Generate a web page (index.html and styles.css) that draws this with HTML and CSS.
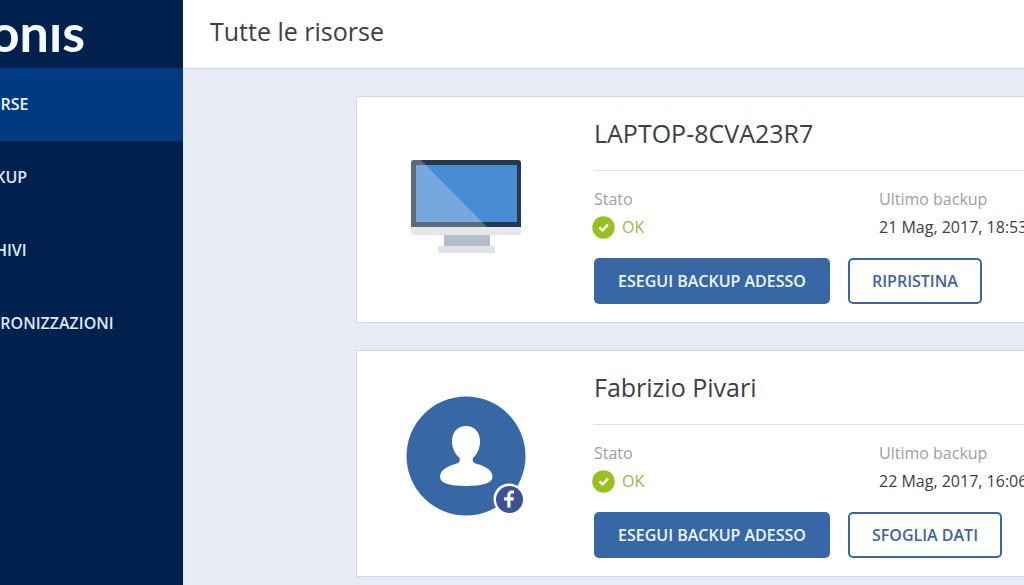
FILE: index.html
```
<!DOCTYPE html>
<html lang="it">
<head>
<meta charset="utf-8">
<title>Tutte le risorse</title>
<link rel="stylesheet" href="styles.css">
</head>
<body>
<div class="app">
  <aside class="sidebar">
    <div class="logo">Acronıs</div>
    <nav class="nav">
      <a class="nav-link active" href="#risorse" aria-current="page">RISORSE</a>
      <a class="nav-link" href="#backup">BACKUP</a>
      <a class="nav-link" href="#archivi">ARCHIVI</a>
      <a class="nav-link" href="#sincronizzazioni">SINCRONIZZAZIONI</a>
    </nav>
  </aside>
  <div class="main">
    <header class="topbar"><h1 class="page-title">Tutte le risorse</h1></header>
    <main class="cards">
      <article class="card">
        <div class="picture">
          <svg width="120" height="120" viewBox="0 0 120 120" aria-hidden="true">
            <path d="M38 85h46v13H38z" fill="#b3bec8"/>
            <path d="M32 98h57v7H32z" fill="#dfe4e8"/>
            <path d="M5 78h110v6q0 3-3 3H8q-3 0-3-3z" fill="#e3e7ea"/>
            <path d="M8 12h104q3 0 3 3v64H5V15q0-3 3-3z" fill="#263850"/>
            <path d="M10 17h101v57H10z" fill="#488bd3"/>
            <path d="M8 12h7l66 67H5V15q0-3 3-3z" fill="#fff" fill-opacity=".25"/>
          </svg>
        </div>
        <div class="info">
          <h2 class="name">LAPTOP-8CVA23R7</h2>
          <dl class="facts">
            <div class="fact">
              <dt>Stato</dt>
              <dd class="ok"><svg class="tick" width="23" height="23" viewBox="0 0 23 23" aria-hidden="true"><circle cx="11.5" cy="11.5" r="11.2" fill="#97c11f"/><path d="M7.5 11.3l3 3 5.5-5.6" fill="none" stroke="#fff" stroke-width="2.5"/></svg>OK</dd>
            </div>
            <div class="fact">
              <dt>Ultimo backup</dt>
              <dd>21 Mag, 2017, 18:53</dd>
            </div>
          </dl>
          <div class="actions">
            <button class="btn primary" type="button">ESEGUI BACKUP ADESSO</button>
            <button class="btn" type="button">RIPRISTINA</button>
          </div>
        </div>
      </article>
      <article class="card">
        <div class="picture">
          <svg width="120" height="120" viewBox="0 0 120 120" aria-hidden="true">
            <circle cx="60" cy="60" r="59.5" fill="#3867a6"/>
            <path d="M60 30c9 0 14 6.500 14 15.500 0 7-3 13-7 16.500-1 4 1 5 4 6 8 2 15.500 6 15.500 13 0 6-10 9-26.500 9s-26-3-26-9c0-7 7.500-11 15.500-13 3-1 5-2 4-6-4-3.500-7.500-9.500-7.500-16.500C46 36.500 51 30 60 30z" fill="#fff"/>
            <circle cx="103" cy="103" r="15.500" fill="#fff"/>
            <circle cx="103.500" cy="103.500" r="13.500" fill="#3b5296"/>
            <path d="M101.300 111.500v-7h-3.200v-3.200h3.200v-2c0-3 1.800-4.700 4.500-4.700h2.200v3h-1.700c-1.300 0-1.800.6-1.800 1.700v2h3.500l-.5 3.200h-3v7z" fill="#fff"/>
          </svg>
        </div>
        <div class="info">
          <h2 class="name">Fabrizio Pivari</h2>
          <dl class="facts">
            <div class="fact">
              <dt>Stato</dt>
              <dd class="ok"><svg class="tick" width="23" height="23" viewBox="0 0 23 23" aria-hidden="true"><circle cx="11.5" cy="11.5" r="11.2" fill="#97c11f"/><path d="M7.5 11.3l3 3 5.5-5.6" fill="none" stroke="#fff" stroke-width="2.5"/></svg>OK</dd>
            </div>
            <div class="fact">
              <dt>Ultimo backup</dt>
              <dd>22 Mag, 2017, 16:06</dd>
            </div>
          </dl>
          <div class="actions">
            <button class="btn primary" type="button">ESEGUI BACKUP ADESSO</button>
            <button class="btn" type="button">SFOGLIA DATI</button>
          </div>
        </div>
      </article>
    </main>
  </div>
</div>
</body>
</html>
```
FILE: styles.css
```
* { box-sizing: border-box; }
body {
  margin: 0;
  overflow: hidden;
  background: #e6ebf4;
  color: #3c4046;
  font-family: "Open Sans", "Noto Sans", sans-serif;
  font-size: 16px;
}
.app { display: flex; min-height: 100vh; }
.sidebar {
  flex: none;
  width: 240px;
  margin-left: -57px;
  background: #00204d;
}
.logo {
  display: flex;
  justify-content: flex-end;
  height: 68px;
  padding-right: 98px;
  color: #f4faff;
  font-family: Lato, sans-serif;
  font-size: 52px;
  font-weight: 700;
  line-height: 64px;
}
.nav { display: flex; flex-direction: column; }
.nav-link {
  padding-left: 21px;
  color: #dceaf5;
  font-weight: 600;
  line-height: 73px;
  text-decoration: none;
  white-space: nowrap;
}
.nav-link.active { background: #003b82; color: #f0f8ff; }
.main { flex: 1; min-width: 0; }
.topbar {
  padding-left: 27px;
  background: #fff;
  border-bottom: 1px solid #cfd6e8;
}
.page-title, .name { margin: 0; font-weight: 400; font-size: 25px; }
.page-title { line-height: 62px; padding-bottom: 6px; }
.cards {
  display: flex;
  flex-direction: column;
  gap: 27px;
  padding: 27px 0 0 173px;
}
.card {
  display: flex;
  background: #fff;
  border: 1px solid #cdd8ea;
  border-right: 0;
}
.picture {
  flex: none;
  display: flex;
  justify-content: center;
  width: 218px;
  padding-top: 51px;
}
.card + .card .picture { padding-top: 45px; }
.info { flex: 1; min-width: 0; padding: 0 0 18px 19px; }
.name { line-height: 72px; padding-bottom: 1px; border-bottom: 1px solid #dfe2e6; }
.facts {
  display: grid;
  grid-template-columns: 285px 1fr;
  margin: 0;
  padding: 14px 0 17px;
  line-height: 28px;
}
.fact { min-width: 0; white-space: nowrap; }
dt { color: #9b9fa5; }
dd { margin: 0; }
.ok { display: flex; align-items: center; gap: 7px; color: #97b94a; }
.tick { flex: none; margin-left: -2px; }
.actions { display: flex; gap: 18px; }
.btn {
  height: 46px;
  padding: 0 22px;
  border: 2px solid #3867a6;
  border-radius: 5px;
  background: #fff;
  color: #3f64a0;
  font: inherit;
  font-weight: 600;
}
.primary { background: #3867a6; color: #eef7ff; }
```
